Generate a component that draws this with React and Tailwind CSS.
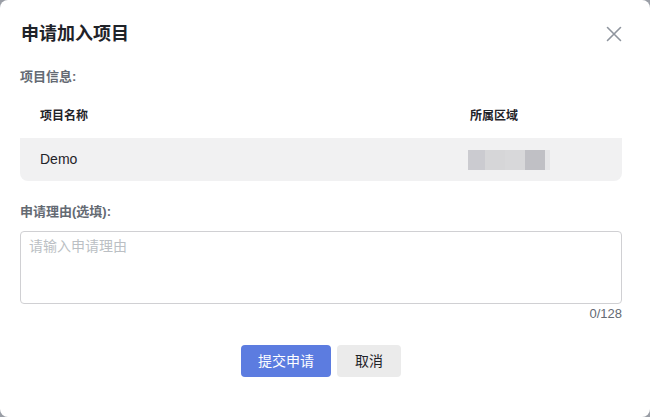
import React from "react";

export default function App() {
  const font = { fontFamily: '"Liberation Sans", "Noto Sans CJK SC", sans-serif' };
  return (
    <div className="w-[650px] h-[417px] bg-[#9a9ea6]" style={font}>
      <div className="w-[650px] h-[417px] bg-white rounded-[8px] flex flex-col px-[20px] relative">
        <div className="flex items-center justify-between h-[34px] mt-[17px]">
          <div className="text-[18px] font-bold text-[#1f2329] leading-none pl-[1px]">申请加入项目</div>
          <svg width="16" height="16" viewBox="0 0 16 16" className="mr-[8px]">
            <path d="M1.5 1.5 L14.5 14.5 M14.5 1.5 L1.5 14.5" stroke="#8f959e" strokeWidth="1.6" strokeLinecap="round" />
          </svg>
        </div>
        <div className="mt-[16px] text-[13px] font-bold text-[#646a73] leading-[20px]">项目信息:</div>
        <div className="mt-[7px] w-[602px]">
          <div className="flex h-[44px] items-center text-[12px] font-bold text-[#1f2329]">
            <div className="pl-[20px] w-[450px]">项目名称</div>
            <div>所属区域</div>
          </div>
          <div className="flex h-[43px] items-center bg-[#f1f1f2] rounded-b-[8px] text-[14px] text-[#1f2329]">
            <div className="pl-[20px] w-[448px]">Demo</div>
            <div className="flex h-[20px] relative">
              <div className="w-[17px] h-[20px] bg-[#cbcbd0]"></div>
              <div className="w-[20px] h-[20px] bg-[#d6d6d8]"></div>
              <div className="w-[20px] h-[20px] bg-[#d8d8da]"></div>
              <div className="w-[20px] h-[20px] bg-[#c0c0c5]"></div>
              <div className="w-[5px] h-[20px] bg-[#e6e6e8]"></div>
            </div>
          </div>
        </div>
        <div className="mt-[21px] text-[13px] font-bold text-[#646a73] leading-[20px]">申请理由(选填):</div>
        <div className="mt-[9px] w-[602px] h-[73px] border border-[#d0d0d3] rounded-[4px] px-[8px] py-[4px]">
          <div className="text-[14px] text-[#bbbfc4] leading-[20px]">请输入申请理由</div>
        </div>
        <div className="w-[602px] text-right text-[13px] text-[#646a73] leading-[20px]">0/128</div>
        <div className="flex justify-center gap-[6px] mt-[21px] w-[602px]">
          <div className="w-[90px] h-[32px] bg-[#5c7ce0] rounded-[4px] text-white text-[14px] flex items-center justify-center">提交申请</div>
          <div className="w-[64px] h-[32px] bg-[#ebebeb] rounded-[4px] text-[#1f2329] text-[14px] flex items-center justify-center">取消</div>
        </div>
      </div>
    </div>
  );
}
